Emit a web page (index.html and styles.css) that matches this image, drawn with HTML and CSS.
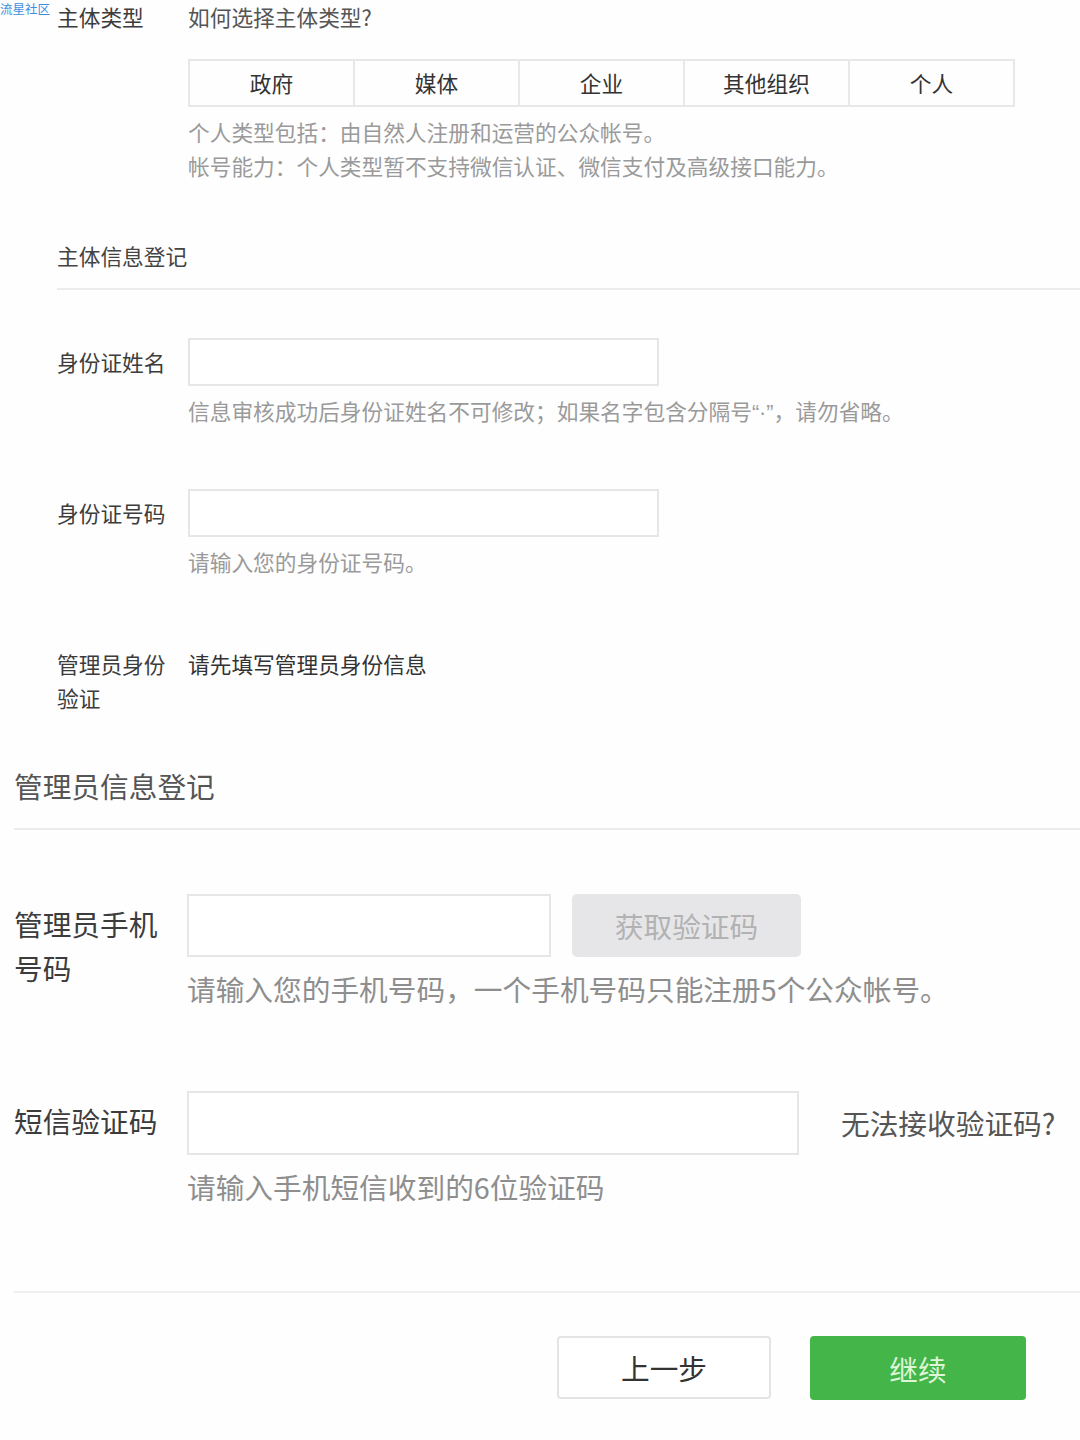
FILE: index.html
```html
<!DOCTYPE html>
<html lang="zh-CN">
<head>
  <meta charset="UTF-8">
  <meta name="viewport" content="width=device-width, initial-scale=1">
  <title>公众号注册 - 信息登记</title>
  <link rel="stylesheet" href="styles.css">
</head>
<body>
  <div class="watermark">流星社区</div>

  <div class="top">
    <div class="row type-row">
      <div class="label">主体类型</div>
      <div class="field">
        <div class="link-text">如何选择主体类型?</div>
        <div class="seg">
          <div class="seg-item">政府</div>
          <div class="seg-item">媒体</div>
          <div class="seg-item">企业</div>
          <div class="seg-item">其他组织</div>
          <div class="seg-item">个人</div>
        </div>
        <div class="tips type-tips">
          <p>个人类型包括：由自然人注册和运营的公众帐号。</p>
          <p>帐号能力：个人类型暂不支持微信认证、微信支付及高级接口能力。</p>
        </div>
      </div>
    </div>

    <h3 class="sub-title">主体信息登记</h3>

    <div class="row input-row first">
      <div class="label">身份证姓名</div>
      <div class="field">
        <input class="text-input" type="text">
        <div class="tips">信息审核成功后身份证姓名不可修改；如果名字包含分隔号<span class="mark">“·”</span>，请勿省略。</div>
      </div>
    </div>

    <div class="row input-row">
      <div class="label">身份证号码</div>
      <div class="field">
        <input class="text-input" type="text">
        <div class="tips">请输入您的身份证号码。</div>
      </div>
    </div>

    <div class="row verify-row">
      <div class="label">管理员身份<br>验证</div>
      <div class="field">
        <div class="plain">请先填写管理员身份信息</div>
      </div>
    </div>
  </div>

  <div class="bottom">
    <h3 class="sub-title big">管理员信息登记</h3>

    <div class="row phone-row">
      <div class="label">管理员手机<br>号码</div>
      <div class="field">
        <div class="inline">
          <input class="text-input phone" type="text">
          <button class="code-btn" disabled>获取验证码</button>
        </div>
        <div class="tips">请输入您的手机号码，一个手机号码只能注册5个公众帐号。</div>
      </div>
    </div>

    <div class="row sms-row">
      <div class="label">短信验证码</div>
      <div class="field">
        <div class="inline">
          <input class="text-input sms" type="text">
          <a class="help-link" href="#">无法接收验证码?</a>
        </div>
        <div class="tips">请输入手机短信收到的6位验证码</div>
      </div>
    </div>

    <div class="actions">
      <button class="btn btn-default">上一步</button>
      <button class="btn btn-primary">继续</button>
    </div>
  </div>
</body>
</html>
```

FILE: styles.css
```css
body {
  margin: 0;
  padding: 0;
  background: #fefefe;
  color: #353535;
  font-family: "Noto Sans CJK SC", "Noto Sans", sans-serif;
  position: relative;
}

p {
  margin: 0;
}

.watermark {
  position: absolute;
  left: 0;
  top: 0;
  font-size: 12.5px;
  line-height: 18px;
  color: #3b8fe0;
}

/* top part: smaller scale */
.top {
  padding-left: 57px;
  font-size: 21.7px;
  line-height: 34px;
}

.row {
  display: flex;
}

.top .label {
  width: 131px;
  flex-shrink: 0;
  color: #3c3c3c;
}

.field {
  flex: 1;
}

.link-text {
  color: #555;
}

.seg {
  display: flex;
  width: 827px;
  margin-top: 25px;
  border: 2px solid #e8e8ea;
  box-sizing: border-box;
}

.seg-item {
  flex: 1;
  height: 44px;
  line-height: 44px;
  text-align: center;
  color: #333;
  border-left: 2px solid #e8e8ea;
}

.seg-item:first-child {
  border-left: none;
}

.tips {
  color: #9a9a9a;
  margin-top: 8px;
}

.mark {
  font-family: "Liberation Sans", sans-serif;
  line-height: 1;
}

.sub-title {
  margin: 56px 0 0;
  padding-bottom: 15px;
  font-size: 21.7px;
  line-height: 34px;
  font-weight: normal;
  color: #444;
  border-bottom: 2px solid #ececee;
}

.input-row .label {
  padding-top: 7px;
}

.input-row.first {
  margin-top: 48px;
}

.input-row {
  margin-top: 61px;
}

.text-input {
  display: block;
  width: 471px;
  height: 48px;
  box-sizing: border-box;
  border: 2px solid #e6e6e8;
  background: #fff;
  outline: none;
  margin: 0;
  font-family: inherit;
}

.verify-row {
  margin-top: 68px;
}

.plain {
  color: #333;
}

/* bottom part: larger scale */
.bottom {
  padding-left: 14px;
  font-size: 28.7px;
  line-height: 44px;
}

.sub-title.big {
  margin-top: 49px;
  padding-bottom: 20px;
  font-size: 28.7px;
  line-height: 44px;
  color: #555;
}

.bottom .label {
  width: 173px;
  flex-shrink: 0;
  padding-top: 8px;
  color: #3c3c3c;
}

.phone-row {
  margin-top: 64px;
}

.inline {
  display: flex;
  align-items: center;
}

.text-input.phone {
  width: 364px;
  height: 63px;
}

.code-btn {
  margin-left: 21px;
  width: 229px;
  height: 63px;
  border: none;
  border-radius: 5px;
  background: #e6e6e9;
  color: #b2b2b2;
  font-size: 28.7px;
  font-family: inherit;
}

.bottom .tips {
  margin-top: 10px;
  color: #8e8e8e;
}

.sms-row {
  margin-top: 80px;
}

.text-input.sms {
  width: 612px;
  height: 64px;
}

.help-link {
  margin-left: 42px;
  color: #555;
  text-decoration: none;
}

.actions {
  display: flex;
  justify-content: flex-end;
  gap: 39px;
  margin-top: 82px;
  padding-top: 43px;
  padding-right: 54px;
  border-top: 2px solid #f0f0f2;
}

.btn {
  height: 63px;
  border-radius: 4px;
  font-size: 28.7px;
  font-family: inherit;
  cursor: pointer;
}

.btn-default {
  width: 214px;
  background: #fff;
  border: 2px solid #e4e4e6;
  color: #333;
}

.btn-primary {
  width: 216px;
  height: 64px;
  background: #44b549;
  border: none;
  color: #dcf6d6;
}
```
